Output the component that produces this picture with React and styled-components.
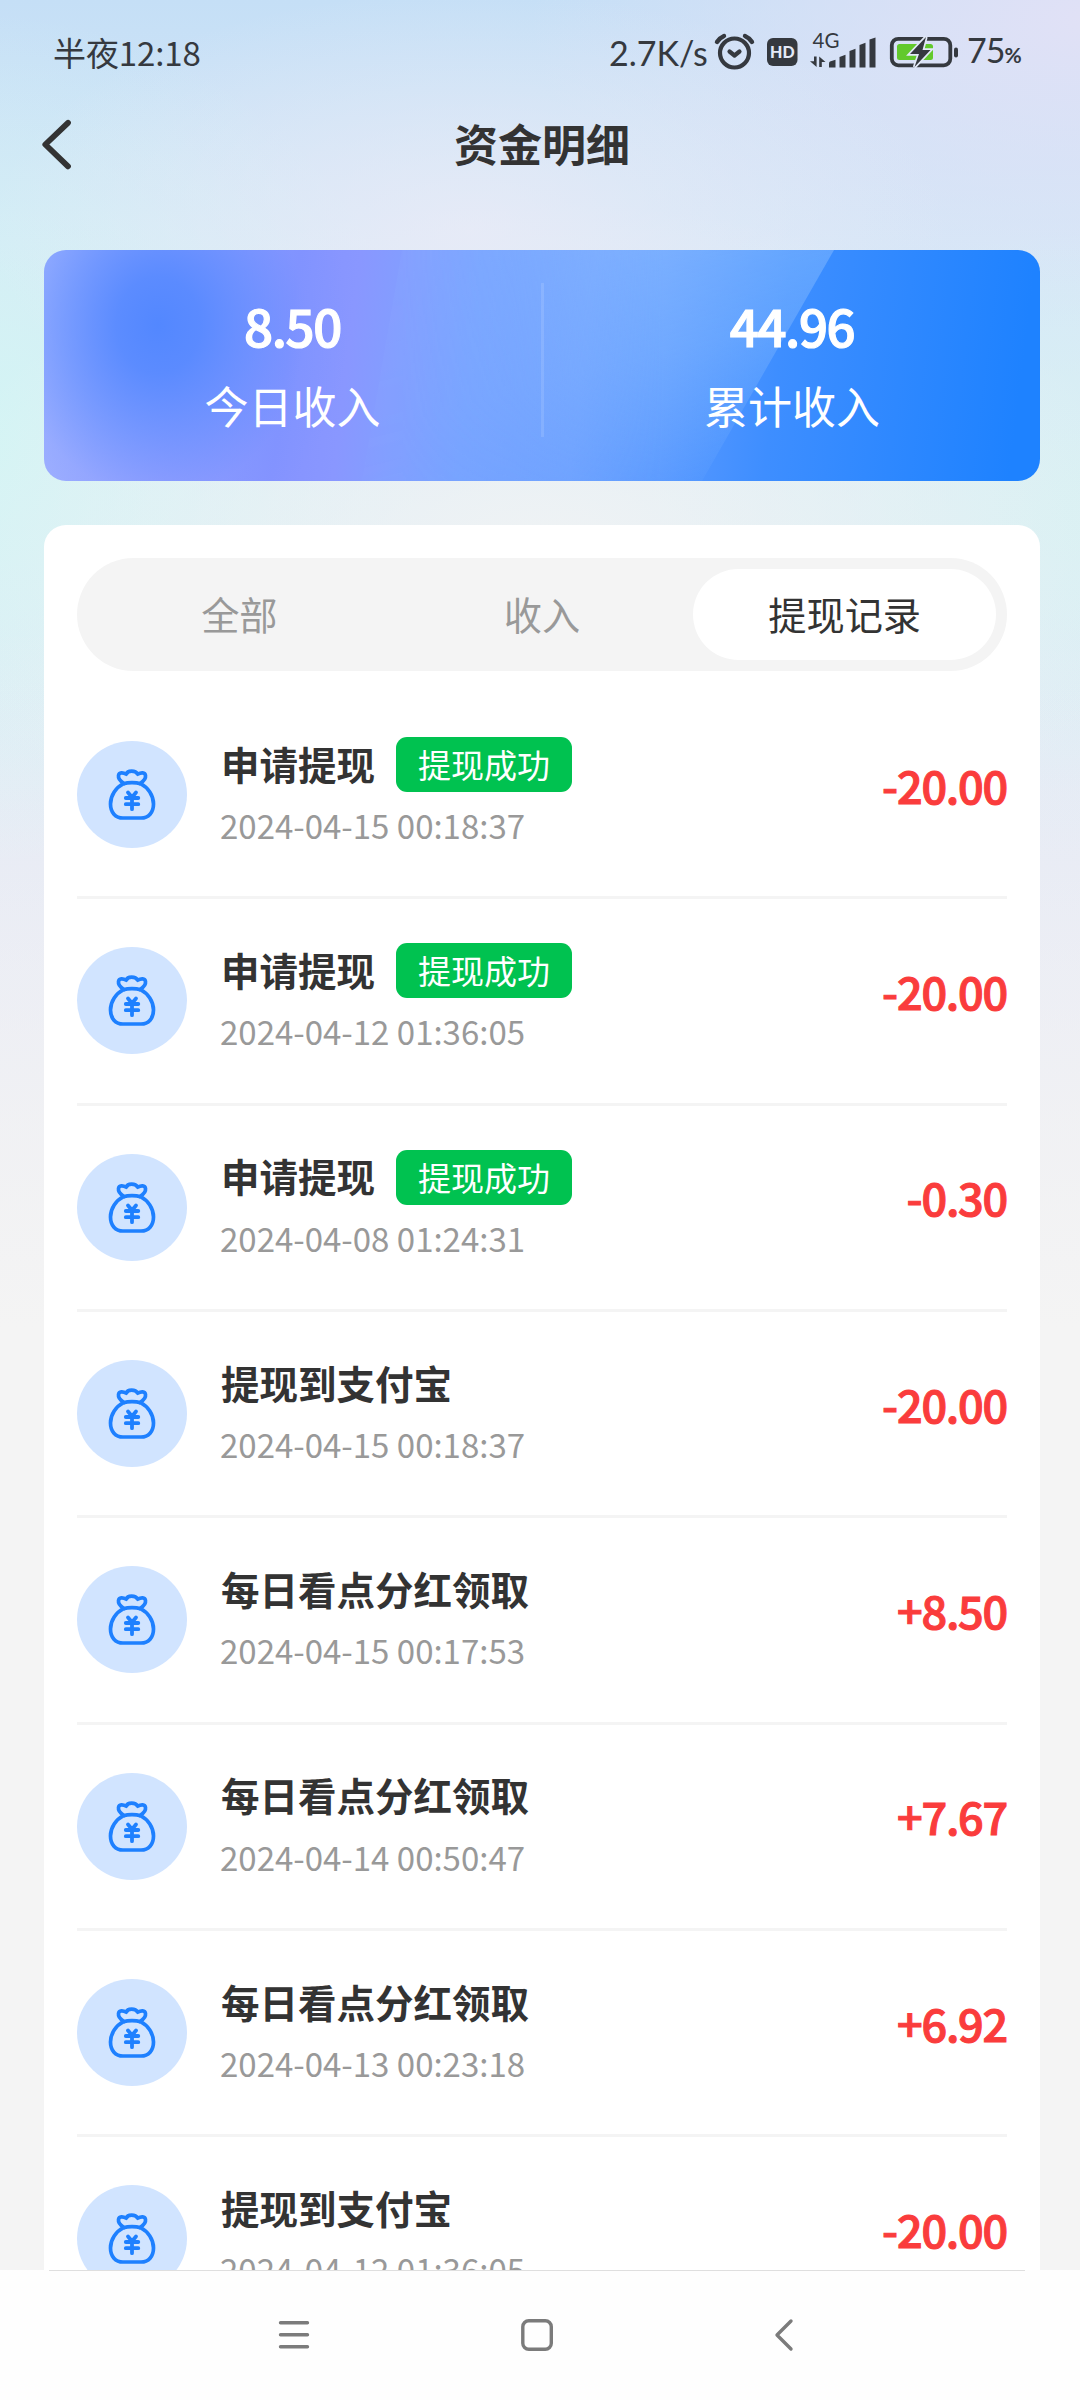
import React from "react";
import styled, { createGlobalStyle } from "styled-components";

const Global = createGlobalStyle`
  * { box-sizing: border-box; }
  body {
    margin: 0;
    background: #f4f4f4;
    font-family: "Noto Sans CJK SC", "Noto Sans", sans-serif;
    color: #333;
  }
`;

const Screen = styled.div`
  width: 1080px;
  height: 2400px;
  overflow: hidden;
  display: flex;
  flex-direction: column;
  background:
    linear-gradient(180deg, rgba(244, 244, 244, 0) 620px, rgba(244, 244, 244, 0.2) 860px, rgba(244, 244, 244, 1) 1330px),
    radial-gradient(ellipse 480px 240px at 470px 230px, rgba(234, 235, 247, 0.8), rgba(234, 235, 247, 0) 100%),
    radial-gradient(ellipse 620px 360px at 540px 560px, rgba(241, 243, 244, 0.95), rgba(241, 243, 244, 0) 100%),
    radial-gradient(ellipse 460px 430px at -30px 440px, rgba(211, 245, 244, 0.95), rgba(211, 245, 244, 0) 100%),
    radial-gradient(ellipse 460px 280px at 1100px 510px, rgba(216, 241, 243, 0.95), rgba(216, 241, 243, 0) 100%),
    radial-gradient(ellipse 560px 300px at 1090px 20px, rgba(225, 225, 246, 1), rgba(225, 225, 246, 0) 100%),
    linear-gradient(180deg, #c5dff6 0, #d5e7f7 240px, #dcedf6 560px, #e6eaf5 860px, #ececf3 1300px);
`;

const StatusBar = styled.header`
  height: 104px;
  padding: 0 57px 0 53px;
  display: flex;
  align-items: center;
  justify-content: space-between;
  flex: none;
  color: #35393f;
`;

const Clock = styled.span`
  font-size: 33px;
  line-height: 48px;
  letter-spacing: -0.1px;
`;

const StatusGroup = styled.div`
  display: flex;
  align-items: center;
  height: 104px;
`;

const Speed = styled.span`
  width: 101px;
  font-family: Lato, "Noto Sans", sans-serif;
  font-size: 34px;
  line-height: 40px;
  letter-spacing: 0;
  white-space: nowrap;
  padding-top: 1px;
`;

const StatusIcons = styled.svg`
  display: block;
  width: 248px;
  height: 104px;
`;

const Battery = styled.span`
  width: 65px;
  padding-left: 9px;
  font-family: Lato, "Noto Sans", sans-serif;
  font-size: 34px;
  line-height: 40px;
  letter-spacing: -1px;
  white-space: nowrap;
`;

const Percent = styled.small`
  font-size: 21px;
  font-weight: 700;
`;

const TitleBar = styled.div`
  height: 146px;
  padding: 0 40px;
  display: grid;
  grid-template-columns: 60px 1fr 56px;
  align-items: start;
  flex: none;
`;

const BackIcon = styled.svg`
  width: 36px;
  height: 56px;
  margin-top: 12px;
  display: block;
`;

const PageTitle = styled.h1`
  margin: 7px 0 0;
  text-align: center;
  font-size: 44px;
  line-height: 64px;
  font-weight: 700;
`;

const Summary = styled.section`
  position: relative;
  flex: none;
  width: 996px;
  height: 231px;
  margin-left: 44px;
  border-radius: 22px;
  overflow: hidden;
  display: grid;
  grid-template-columns: 497px 3px 496px;
  align-items: center;
  color: #fff;
  background:
    radial-gradient(ellipse 190px 220px at 114px 75px, rgba(79, 134, 255, 0.95) 0, rgba(80, 135, 255, 0.84) 22%, rgba(86, 139, 255, 0.52) 50%, rgba(105, 148, 255, 0.16) 78%, rgba(120, 150, 255, 0) 100%),
    linear-gradient(97deg, #a3b4ff 0, #959fff 14%, #8593ff 25%, #8997ff 31%, #829eff 36%, #76a2ff 43%, #6ca0ff 54%, #5597ff 64%, #3e8eff 73%, #2e88ff 85%, #1e82ff 97%);
`;

const Sheen = styled.div`
  position: absolute;
  inset: 0;
  clip-path: polygon(358px 0, 790px 0, 658px 231px, 318px 231px);
  background: linear-gradient(166deg, rgba(165, 205, 255, 0.46) 22%, rgba(155, 200, 255, 0.34) 54%, rgba(130, 180, 255, 0.02) 88%);
  mask-image: linear-gradient(90deg, rgba(0, 0, 0, 0.14) 358px, rgba(0, 0, 0, 0.4) 470px, #000 620px);
`;

const Divider = styled.i`
  height: 154px;
  margin-top: -11px;
  background: rgba(255, 255, 255, 0.12);
  z-index: 1;
`;

const Stat = styled.div`
  display: flex;
  flex-direction: column;
  align-items: center;
  z-index: 1;
`;

const StatValue = styled.strong`
  margin-top: -6px;
  font-size: 51px;
  line-height: 72px;
  font-weight: 500;
  letter-spacing: -1.4px;
  -webkit-text-stroke: 1.2px #fff;
`;

const StatLabel = styled.span`
  margin-top: 12px;
  font-size: 44px;
  line-height: 64px;
  font-weight: 400;
`;

const Panel = styled.main`
  flex: 1;
  min-height: 0;
  width: 996px;
  margin: 44px 0 0 44px;
  padding: 33px 33px 0;
  border-radius: 22px 22px 0 0;
  background: #fff;
  overflow: hidden;
`;

const Tabs = styled.nav`
  display: grid;
  grid-template-columns: repeat(3, 1fr);
  height: 113px;
  padding: 11px;
  border-radius: 57px;
  background: #f4f4f4;
`;

const Tab = styled.button`
  border: 0;
  padding: 0 0 2px;
  border-radius: 46px;
  font: inherit;
  font-size: 38.2px;
  font-weight: 400;
  color: ${(p) => (p.$active ? "#333" : "#999")};
  background: ${(p) => (p.$active ? "#fff" : "transparent")};
`;

const List = styled.ul`
  list-style: none;
  margin: 22px 0 0;
  padding: 0;
`;

const Row = styled.li`
  display: flex;
  align-items: center;
  height: 206.33px;
  border-bottom: 3px solid #f4f4f4;
`;

const IconDisc = styled.div`
  width: 110px;
  height: 107px;
  border-radius: 50%;
  background: #d1e4ff;
  flex: none;
`;

const Info = styled.div`
  flex: 1;
  margin-left: 33px;
  padding-bottom: 2px;
`;

const Heading = styled.div`
  display: flex;
  align-items: center;
  height: 55px;
  font-size: 38.5px;
  font-weight: 700;
`;

const HeadingText = styled.span`
  padding: 0 0 4px 1px;
`;

const Badge = styled.span`
  margin-left: 21px;
  padding: 0 22px;
  height: 55px;
  line-height: 54px;
  border-radius: 11px;
  background: #00c250;
  color: #fff;
  font-size: 33px;
  font-weight: 400;
`;

const Time = styled.div`
  margin: 9px 0 1px;
  font-size: 33px;
  line-height: 48px;
  color: #999;
  font-weight: 400;
`;

const Amount = styled.span`
  padding-bottom: 21px;
  font-size: 45px;
  font-weight: 500;
  letter-spacing: -1.2px;
  -webkit-text-stroke: 1.1px #fa3c3c;
  color: #fa3c3c;
`;

const SystemNav = styled.footer`
  height: 130px;
  flex: none;
  background: #fefefe;
  display: flex;
  flex-direction: column;
  align-items: center;
`;

const NavRule = styled.i`
  width: 976px;
  height: 1px;
  margin-right: 6px;
  background: #dfdfdf;
`;

const NavIcons = styled.svg`
  width: 1080px;
  height: 129px;
  display: block;
`;

function MoneyBag() {
  return (
    <IconDisc>
      <svg width="110" height="107" viewBox="0 0 110 107" fill="none" stroke="#1e80ff" strokeWidth="3.7" strokeLinecap="round" strokeLinejoin="round">
        <path d="M47 42.5 C43 40 41.2 36.5 41.5 34.5 C42 31 46 31.3 49.3 33.2 C50.5 29 58.5 29 60.7 33.2 C64 31.3 68 31 68.5 34.5 C68.8 36.5 67 40 63 42.5" />
        <path d="M46.5 42.7 C51 41.2 59 41.2 63.5 42.7 C71 46.5 76.5 54.5 76.5 63 C76.5 71.5 71.5 77 64 77 H46 C38.5 77 33.5 71.5 33.5 63 C33.5 54.5 39 46.5 46.5 42.7 Z" />
        <path strokeWidth="3.8" d="M51 51.5 L55 56.2 L59 51.5 M48.8 57 H61.3 M48.8 63.2 H61.3 M55 57 V68.2" />
      </svg>
    </IconDisc>
  );
}

function StatusGlyphs() {
  return (
    <StatusIcons viewBox="710 0 248 104" fill="none">
      <g stroke="#35393f" strokeLinecap="round" strokeLinejoin="round">
        <circle cx="734.5" cy="53" r="14.5" strokeWidth="4.2" />
        <path strokeWidth="4.2" d="M729.5 51.5 L734.5 55.5 L739.5 51.5" />
        <path strokeWidth="4.4" d="M717 42 Q719.5 38 724 36 M752 42 Q749.5 38 745 36" />
      </g>
      <rect x="767" y="38" width="30.5" height="28" rx="6" fill="#35393f" />
      <text x="782.3" y="57.6" textAnchor="middle" fontFamily="Lato, sans-serif" fontWeight="900" fontSize="16" fill="#e3e9f7">HD</text>
      <text x="812.5" y="48" fontFamily="Lato, sans-serif" fontSize="20.5" fill="#35393f">4G</text>
      <g fill="#35393f">
        <path d="M829 63.5 Q829 62 830 61.5 L835.5 59.8 V67.5 H829 Z" />
        <path d="M839.5 57 L845.5 54.8 V67.5 H839.5 Z" />
        <path d="M849.5 51 L855.5 48.8 V67.5 H849.5 Z" />
        <path d="M859.5 45 L865.5 42.8 V67.5 H859.5 Z" />
        <path d="M869.5 39.5 L875.5 37.5 V67.5 H869.5 Z" />
        <path d="M814 56.5 H816.6 V67 L810 61.2 H814 Z M819.2 67 V56.5 L825.5 62 H821.8 V67 Z" />
        <rect x="954" y="47.5" width="4" height="10" rx="2" />
      </g>
      <rect x="891.8" y="38.8" width="58.5" height="26.5" rx="6.5" stroke="#35393f" strokeWidth="3.8" />
      <rect x="897" y="44" width="36" height="16" rx="2.5" fill="#62c92c" />
      <path d="M926 37 L910 54 H919 L914.5 67 L930.5 50 H922.5 Z" fill="#35393f" stroke="#e2e9f7" strokeWidth="3.4" paintOrder="stroke" />
    </StatusIcons>
  );
}

const records = [
  { title: "申请提现", time: "2024-04-15 00:18:37", amount: "-20.00", status: "提现成功" },
  { title: "申请提现", time: "2024-04-12 01:36:05", amount: "-20.00", status: "提现成功" },
  { title: "申请提现", time: "2024-04-08 01:24:31", amount: "-0.30", status: "提现成功" },
  { title: "提现到支付宝", time: "2024-04-15 00:18:37", amount: "-20.00" },
  { title: "每日看点分红领取", time: "2024-04-15 00:17:53", amount: "+8.50" },
  { title: "每日看点分红领取", time: "2024-04-14 00:50:47", amount: "+7.67" },
  { title: "每日看点分红领取", time: "2024-04-13 00:23:18", amount: "+6.92" },
  { title: "提现到支付宝", time: "2024-04-12 01:36:05", amount: "-20.00" },
];

export default function App() {
  return (
    <Screen>
      <Global />
      <StatusBar>
        <Clock>半夜12:18</Clock>
        <StatusGroup>
          <Speed>2.7K/s</Speed>
          <StatusGlyphs />
          <Battery>75<Percent>%</Percent></Battery>
        </StatusGroup>
      </StatusBar>
      <TitleBar>
        <BackIcon viewBox="40 116 36 56" fill="none" stroke="#333" strokeWidth="5.8" strokeLinecap="round" strokeLinejoin="round">
          <path d="M68 122.8 L45.3 144.5 L68 166.3" />
        </BackIcon>
        <PageTitle>资金明细</PageTitle>
      </TitleBar>
      <Summary>
        <Sheen />
        <Stat>
          <StatValue>8.50</StatValue>
          <StatLabel>今日收入</StatLabel>
        </Stat>
        <Divider />
        <Stat>
          <StatValue>44.96</StatValue>
          <StatLabel>累计收入</StatLabel>
        </Stat>
      </Summary>
      <Panel>
        <Tabs>
          <Tab>全部</Tab>
          <Tab>收入</Tab>
          <Tab $active>提现记录</Tab>
        </Tabs>
        <List>
          {records.map((r, i) => (
            <Row key={i}>
              <MoneyBag />
              <Info>
                <Heading>
                  <HeadingText>{r.title}</HeadingText>
                  {r.status && <Badge>{r.status}</Badge>}
                </Heading>
                <Time>{r.time}</Time>
              </Info>
              <Amount>{r.amount}</Amount>
            </Row>
          ))}
        </List>
      </Panel>
      <SystemNav>
        <NavRule />
        <NavIcons viewBox="0 2271 1080 129" fill="none" stroke="#7b7b7b" strokeWidth="3.4" strokeLinecap="round" strokeLinejoin="round">
          <path d="M280.5 2322.7 H307.5 M280.5 2334.7 H307.5 M280.5 2346.7 H307.5" />
          <rect x="522.8" y="2320.8" width="28.5" height="28.5" rx="6" />
          <path d="M791 2321 L777 2335 L791 2349" />
        </NavIcons>
      </SystemNav>
    </Screen>
  );
}
